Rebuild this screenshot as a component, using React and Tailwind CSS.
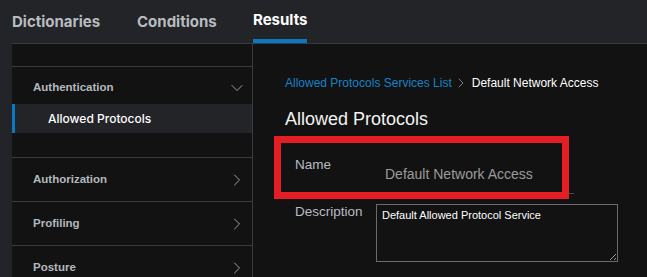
import React from 'react';
import { ChevronDown, ChevronRight } from 'lucide-react';

const sans = { fontFamily: '"Liberation Sans", Arial, sans-serif' };

function SideGroup({ label }) {
  return (
    <div className="h-[44px] shrink-0 flex items-center justify-between pl-[21px] pr-[5px] border-b border-[#3a3b3e]">
      <span className="text-[11.5px] font-bold text-[#b4b8bd]">{label}</span>
      <ChevronRight size={20} strokeWidth={1.2} className="text-[#9aa0a6]" />
    </div>
  );
}

export default function App() {
  return (
    <div className="w-[647px] h-[277px] bg-[#232427] overflow-hidden flex flex-col" style={sans}>
      {/* Tabs */}
      <div className="h-[43px] flex pl-[12px] shrink-0 font-['Inter',sans-serif] text-[15px] font-bold">
        <div className="w-[125px] pt-[2px] flex items-center text-[#b8bcc1]">Dictionaries</div>
        <div className="w-[116px] pt-[2px] flex items-center text-[#b8bcc1]">Conditions</div>
        <div className="pt-[2px] flex items-center text-white border-b-4 border-[#0a7ac0]">Results</div>
      </div>

      <div className="flex-1 flex ml-[12px] bg-[#121212] border-t border-[#3a3b3e] min-h-0">
        {/* Sidebar */}
        <div className="w-[241px] shrink-0 border-r border-[#3a3b3e] flex flex-col overflow-hidden">
          <div className="h-[23px] shrink-0 border-b border-[#3a3b3e]" />
          <div className="h-[37px] shrink-0 flex items-center justify-between pl-[21px] pr-[5px] pt-[4px]">
            <span className="text-[11.5px] font-bold text-[#b4b8bd]">Authentication</span>
            <ChevronDown size={20} strokeWidth={1.2} className="text-[#9aa0a6]" />
          </div>
          <div className="h-[29px] shrink-0 bg-[#232427] border-l-[3px] border-[#0a7ac0] flex items-center pl-[33px] font-['Inter',sans-serif] text-[12px] font-medium text-white">
            Allowed Protocols
          </div>
          <div className="h-[25px] shrink-0 border-b border-[#3a3b3e]" />
          <SideGroup label="Authorization" />
          <SideGroup label="Profiling" />
          <SideGroup label="Posture" />
        </div>

        {/* Content */}
        <div className="flex-1 relative pl-[32px]">
          <div className="mt-[31px] flex items-center h-[16px] text-[12px]">
            <span className="text-[#1583c8]">Allowed Protocols Services List</span>
            <ChevronRight size={16} strokeWidth={1.3} className="ml-[1px] text-[#8a8e93]" />
            <span className="ml-[3px] text-white">Default Network Access</span>
          </div>
          <h1 className="mt-[17px] h-[22px] leading-[22px] text-[18px] text-[#f2f2f2]">Allowed Protocols</h1>

          <div className="mt-[26px] pl-[10px]">
            <div className="flex">
              <div className="w-[81px] leading-[18px] text-[13.5px] text-[#b8bcc1]">Name</div>
              <div className="w-[198px] h-[38px] border-b border-[#4a4b4e] pl-[9px] pt-[9px] leading-[18px] text-[14px] text-[#9b9b9b]">
                Default Network Access
              </div>
            </div>
            <div className="flex mt-[10px]">
              <div className="w-[81px] -mt-px leading-[18px] text-[13.5px] text-[#b8bcc1]">Description</div>
              <textarea
                readOnly
                defaultValue="Default Allowed Protocol Service"
                className="w-[242px] h-[58px] bg-[#121212] border border-[#6b6b6b] px-[5px] py-[3px] text-[11px] leading-[14px] text-white outline-none"
                style={sans}
              />
            </div>
          </div>

          {/* highlight annotation */}
          <div className="absolute left-[21px] top-[92px] w-[295px] h-[63px] border-[7px] border-[#e31e24] pointer-events-none" />
        </div>
      </div>
    </div>
  );
}
